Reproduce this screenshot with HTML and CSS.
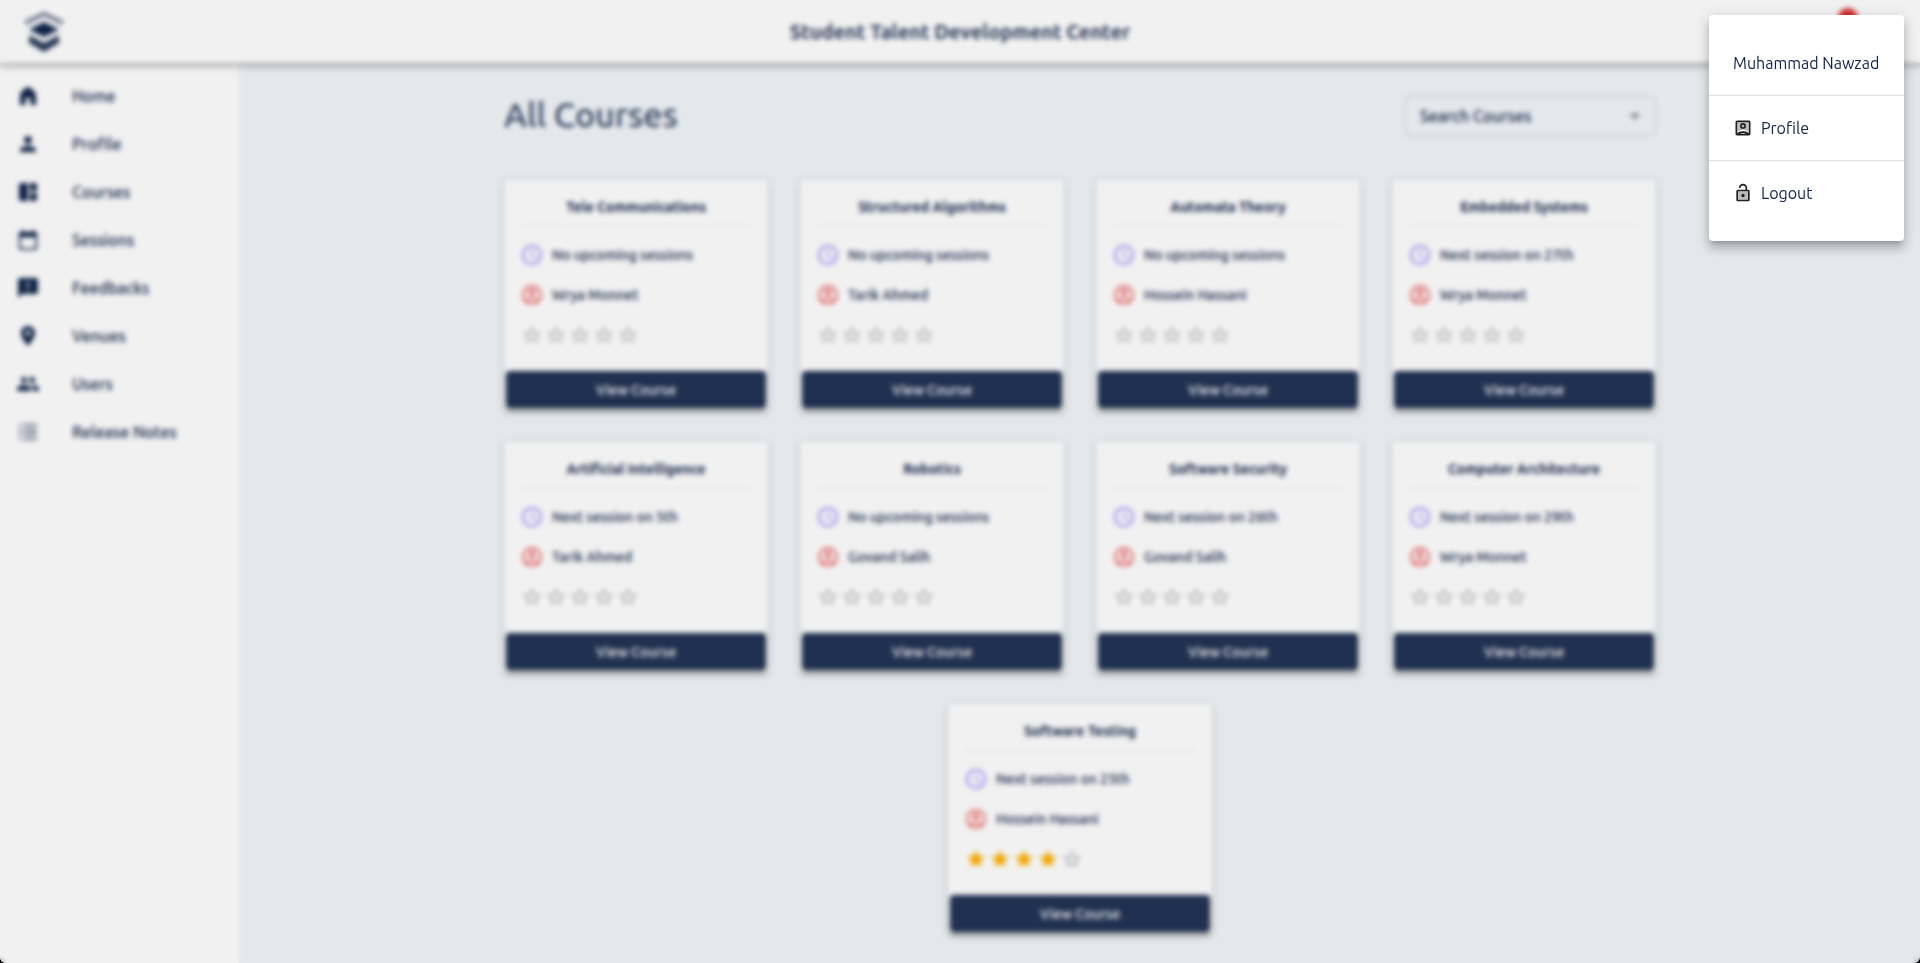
FILE: index.html
```html
<!DOCTYPE html>
<html lang="en">
<head>
<meta charset="utf-8">
<meta name="viewport" content="width=device-width, initial-scale=1">
<title>Student Talent Development Center</title>
<link rel="stylesheet" href="styles.css">
</head>
<body>
<svg class="sprite" aria-hidden="true">
  <symbol id="home" viewBox="0 0 24 24"><path d="M12 3C10 3 4 8 4 11v10h5.500v-7h5v7H20V11c0-3-6-8-8-8z"/></symbol>
  <symbol id="person" viewBox="0 0 24 24"><path d="M12 12c2.210 0 4-1.790 4-4s-1.790-4-4-4-4 1.790-4 4 1.790 4 4 4zm0 2c-2.670 0-8 1.340-8 4v2h16v-2c0-2.660-5.330-4-8-4z"/></symbol>
  <symbol id="board" viewBox="0 0 24 24"><path d="M12 21H5c-1.100 0-2-.9-2-2V5c0-1.100.9-2 2-2h7v18zm2 0h5c1.100 0 2-.9 2-2v-6h-7v8zm7-10V5c0-1.100-.9-2-2-2h-5v8h7z"/></symbol>
  <symbol id="calendar" viewBox="0 0 24 24"><path d="M20 3h-1V1h-2v2H7V1H5v2H4c-1.100 0-2 .9-2 2v16c0 1.100.9 2 2 2h16c1.100 0 2-.9 2-2V5c0-1.100-.9-2-2-2zm0 18H4V9h16v12z"/></symbol>
  <symbol id="feedback" viewBox="0 0 24 24"><path d="M20 2H4c-1.100 0-1.990.9-1.990 2L2 22l4-4h14c1.100 0 2-.9 2-2V4c0-1.100-.9-2-2-2zm-7 12h-2v-2h2v2zm0-4h-2V6h2v4z"/></symbol>
  <symbol id="pin" viewBox="0 0 24 24"><path d="M12 2C8.130 2 5 5.130 5 9c0 5.250 7 13 7 13s7-7.750 7-13c0-3.870-3.130-7-7-7zm0 9.500a2.500 2.500 0 1 1 0-5 2.500 2.500 0 0 1 0 5z"/></symbol>
  <symbol id="people" viewBox="0 0 24 24"><path d="M16 11c1.660 0 2.990-1.340 2.990-3S17.660 5 16 5s-3 1.340-3 3 1.340 3 3 3zm-8 0c1.660 0 2.990-1.340 2.990-3S9.660 5 8 5 5 6.340 5 8s1.340 3 3 3zm0 2c-2.330 0-7 1.170-7 3.500V19h14v-2.500c0-2.330-4.670-3.500-7-3.500zm8 0c-.29 0-.62.020-.97.050 1.160.84 1.970 1.970 1.970 3.450V19h6v-2.500c0-2.330-4.670-3.500-7-3.500z"/></symbol>
  <symbol id="list" viewBox="0 0 24 24"><path d="M3 4h3v2H3zm0 5h3v2H3zm0 4h3v2H3zm0 5h3v2H3zM8 4h13v2H8zm0 5h13v2H8zm0 4h13v2H8zm0 5h13v2H8z"/></symbol>
  <symbol id="clock" viewBox="0 0 24 24"><path d="M11.990 2C6.470 2 2 6.480 2 12s4.470 10 9.990 10C17.520 22 22 17.520 22 12S17.520 2 11.990 2zM12 20a8 8 0 1 1 0-16 8 8 0 0 1 0 16zm.5-13H11v6l5.250 3.150.75-1.230-4.500-2.670z"/></symbol>
  <symbol id="teacher" viewBox="0 0 24 24"><path fill-rule="evenodd" d="M12 2a10 10 0 1 0 0 20 10 10 0 0 0 0-20zM7.350 18.500a7.950 7.950 0 0 1 9.300 0 7.950 7.950 0 0 1-9.300 0zM18.140 17.120a9.950 9.950 0 0 0-12.280 0 8 8 0 1 1 12.280 0z"/><path fill-rule="evenodd" d="M12 6a3.500 3.500 0 1 0 0 7 3.500 3.500 0 0 0 0-7zm0 5a1.500 1.500 0 1 1 0-3 1.500 1.500 0 0 1 0 3z"/></symbol>
  <symbol id="star" viewBox="0 0 24 24"><path d="m22 9.240-7.190-.62L12 2 9.190 8.630 2 9.240l5.460 4.730L5.820 21 12 17.270 18.180 21l-1.630-7.030L22 9.240zM12 15.400l-3.760 2.270 1-4.280-3.320-2.880 4.380-.38L12 6.100l1.710 4.040 4.380.38-3.320 2.880 1 4.280L12 15.400z"/></symbol>
  <symbol id="star-full" viewBox="0 0 24 24"><path d="M12 17.270 18.180 21l-1.640-7.030L22 9.240l-7.190-.61L12 2 9.190 8.630 2 9.240l5.460 4.730L5.820 21z"/></symbol>
  <symbol id="empty-rating" viewBox="0 0 120 24">
    <use href="#star" x="1" y="1" width="22" height="22"/><use href="#star" x="25" y="1" width="22" height="22"/><use href="#star" x="49" y="1" width="22" height="22"/><use href="#star" x="73" y="1" width="22" height="22"/><use href="#star" x="97" y="1" width="22" height="22"/>
  </symbol>
</svg>

<div class="window">
  <div class="app">
    <header class="topbar">
      <a class="logo" href="#" aria-label="Student Talent Development Center">
        <svg viewBox="0 0 44 44" width="44" height="44"><path fill="none" stroke="currentColor" stroke-width="4" opacity=".6" d="M3 13 22 4l19 9"/><path fill="currentColor" d="M22 12 37 19.500 22 27 7 19.500z"/><path fill="currentColor" opacity=".9" d="m7 25 15 8 15-8v8l-15 9-15-9z"/></svg>
      </a>
      <h1 class="brand">Student Talent Development Center</h1>
      <button class="bell" type="button" aria-label="Notifications"><span class="badge"></span></button>
    </header>
    <div class="body">
      <nav class="sidebar">
        <a href="#"><svg><use href="#home"/></svg>Home</a>
        <a href="#"><svg><use href="#person"/></svg>Profile</a>
        <a href="#"><svg><use href="#board"/></svg>Courses</a>
        <a href="#"><svg class="small"><use href="#calendar"/></svg>Sessions</a>
        <a href="#"><svg><use href="#feedback"/></svg>Feedbacks</a>
        <a href="#"><svg><use href="#pin"/></svg>Venues</a>
        <a href="#"><svg><use href="#people"/></svg>Users</a>
        <a href="#"><svg class="light"><use href="#list"/></svg>Release Notes</a>
      </nav>
      <main class="content">
        <div class="head">
          <h2>All Courses</h2>
          <div class="search">
            <select aria-label="Search Courses"><option>Search Courses</option></select>
            <svg viewBox="0 0 24 24" width="24" height="24" aria-hidden="true"><path d="m7 10 5 5 5-5z"/></svg>
          </div>
        </div>
        <div class="cards">
          <article class="card"><h3>Tele Communications</h3><p><svg class="clock"><use href="#clock"/></svg>No upcoming sessions</p><p><svg class="teacher"><use href="#teacher"/></svg>Wrya Monnet</p><svg class="rating" role="img" aria-label="No rating"><use href="#empty-rating"/></svg><button type="button">View Course</button></article>
          <article class="card"><h3>Structured Algorithms</h3><p><svg class="clock"><use href="#clock"/></svg>No upcoming sessions</p><p><svg class="teacher"><use href="#teacher"/></svg>Tarik Ahmed</p><svg class="rating" role="img" aria-label="No rating"><use href="#empty-rating"/></svg><button type="button">View Course</button></article>
          <article class="card"><h3>Automata Theory</h3><p><svg class="clock"><use href="#clock"/></svg>No upcoming sessions</p><p><svg class="teacher"><use href="#teacher"/></svg>Hossein Hassani</p><svg class="rating" role="img" aria-label="No rating"><use href="#empty-rating"/></svg><button type="button">View Course</button></article>
          <article class="card"><h3>Embedded Systems</h3><p><svg class="clock"><use href="#clock"/></svg>Next session on 27th</p><p><svg class="teacher"><use href="#teacher"/></svg>Wrya Monnet</p><svg class="rating" role="img" aria-label="No rating"><use href="#empty-rating"/></svg><button type="button">View Course</button></article>
          <article class="card"><h3>Artificial Intelligence</h3><p><svg class="clock"><use href="#clock"/></svg>Next session on 5th</p><p><svg class="teacher"><use href="#teacher"/></svg>Tarik Ahmed</p><svg class="rating" role="img" aria-label="No rating"><use href="#empty-rating"/></svg><button type="button">View Course</button></article>
          <article class="card"><h3>Robotics</h3><p><svg class="clock"><use href="#clock"/></svg>No upcoming sessions</p><p><svg class="teacher"><use href="#teacher"/></svg>Govand Salih</p><svg class="rating" role="img" aria-label="No rating"><use href="#empty-rating"/></svg><button type="button">View Course</button></article>
          <article class="card"><h3>Software Security</h3><p><svg class="clock"><use href="#clock"/></svg>Next session on 26th</p><p><svg class="teacher"><use href="#teacher"/></svg>Govand Salih</p><svg class="rating" role="img" aria-label="No rating"><use href="#empty-rating"/></svg><button type="button">View Course</button></article>
          <article class="card"><h3>Computer Architecture</h3><p><svg class="clock"><use href="#clock"/></svg>Next session on 29th</p><p><svg class="teacher"><use href="#teacher"/></svg>Wrya Monnet</p><svg class="rating" role="img" aria-label="No rating"><use href="#empty-rating"/></svg><button type="button">View Course</button></article>
          <article class="card"><h3>Software Testing</h3><p><svg class="clock"><use href="#clock"/></svg>Next session on 25th</p><p><svg class="teacher"><use href="#teacher"/></svg>Hossein Hassani</p><svg class="rating" viewBox="0 0 120 24" role="img" aria-label="4 of 5 stars"><g class="gold"><use href="#star-full" x="1" y="1" width="22" height="22"/><use href="#star-full" x="25" y="1" width="22" height="22"/><use href="#star-full" x="49" y="1" width="22" height="22"/><use href="#star-full" x="73" y="1" width="22" height="22"/></g><use href="#star" x="97" y="1" width="22" height="22"/></svg><button type="button">View Course</button></article>
        </div>
      </main>
    </div>
  </div>
  <div class="backdrop"></div>
</div>

<div class="menu" role="menu">
  <div class="item name">Muhammad Nawzad</div>
  <a class="item" role="menuitem" href="#"><svg viewBox="0 0 24 24" aria-hidden="true"><path fill-opacity=".3" d="M5 5h14v12.200C17.300 15.200 14.700 14 12 14s-5.300 1.200-7 3.200z"/><path fill-rule="evenodd" d="M19 3H5a2 2 0 0 0-2 2v14a2 2 0 0 0 2 2h14a2 2 0 0 0 2-2V5a2 2 0 0 0-2-2zM8 19c1.200-.7 2.600-1 4-1s2.800.3 4 1H8zm11-.7c-1.800-1.500-4.300-2.300-7-2.300s-5.200.8-7 2.300V5h14v13.300z"/><path fill-rule="evenodd" d="M12 6a3.500 3.500 0 1 0 0 7 3.500 3.500 0 0 0 0-7zm0 5a1.500 1.500 0 1 1 0-3 1.500 1.500 0 0 1 0 3z"/></svg>Profile</a>
  <button class="item" role="menuitem" type="button"><svg viewBox="0 0 24 24" aria-hidden="true"><path fill-opacity=".3" d="M6 20h12V10H6v10z"/><path fill-rule="evenodd" d="M18 8h-1V6c0-2.760-2.240-5-5-5S7 3.240 7 6h2c0-1.660 1.340-3 3-3s3 1.340 3 3v2H6c-1.100 0-2 .9-2 2v10c0 1.100.9 2 2 2h12c1.100 0 2-.9 2-2V10c0-1.100-.9-2-2-2zm0 12H6V10h12v10z"/><circle cx="12" cy="15" r="2"/></svg>Logout</button>
</div>
</body>
</html>
```

FILE: styles.css
```css
* { box-sizing: border-box; }

html { background: #000; }

body {
  margin: 0;
  color: #0f2246;
  font: 400 16px/24px "Ubuntu", "Noto Sans", "Open Sans", sans-serif;
}

a { color: inherit; text-decoration: none; }
button, select { font: inherit; color: inherit; }
svg { fill: currentColor; flex: none; }
h1, h2, h3, p { margin: 0; }
.sprite { position: absolute; width: 0; height: 0; }

.window {
  position: relative;
  overflow: hidden;
  border-radius: 0 0 6px 6px;
}

.app {
  display: flex;
  flex-direction: column;
  min-height: 100vh;
  background: #e4e8eb;
  font-weight: 500;
}

.topbar {
  display: grid;
  grid-template-columns: 1fr auto 1fr;
  align-items: center;
  height: 63px;
  padding: 0 22px;
  background: #f1f1f1;
  box-shadow: 0 2px 4px -1px rgba(0, 0, 0, .2), 0 4px 5px rgba(0, 0, 0, .14), 0 1px 10px rgba(0, 0, 0, .12);
  z-index: 1;
}

.logo { display: flex; }
.brand { font-size: 20px; line-height: 32px; font-weight: 700; opacity: .9; }

.bell {
  position: relative;
  justify-self: end;
  width: 48px;
  height: 48px;
  margin-right: 36px;
  border: 0;
  background: none;
}

.badge {
  position: absolute;
  top: 0;
  right: 4px;
  width: 20px;
  height: 20px;
  border-radius: 50%;
  background: #d32f2f;
}

.body { display: flex; flex: 1; }

.sidebar {
  width: 240px;
  padding-top: 9px;
  background: #f1f1f1;
  border-right: 1px solid #e0e0e0;
}

.sidebar a {
  display: flex;
  align-items: center;
  gap: 32px;
  height: 48px;
  padding-left: 16px;
}

.sidebar svg { width: 24px; height: 24px; }
.sidebar .small { padding: 1px; }
.sidebar .light { opacity: .7; }

.content { flex: 1; padding: 33px 16px 0; }

.head {
  display: flex;
  justify-content: space-between;
  align-items: flex-start;
  max-width: 1152px;
  margin: 0 auto 44px;
}

.head h2 { font-size: 34px; line-height: 36px; font-weight: 500; opacity: .85; }

.search { position: relative; width: 251px; }

.search select {
  width: 100%;
  height: 40px;
  padding: 0 14px;
  appearance: none;
  border: 1px solid #c0c5d2;
  border-radius: 4px;
  background: transparent;
}

.search svg {
  position: absolute;
  top: 8px;
  right: 9px;
  color: #666;
  pointer-events: none;
}

.cards {
  display: flex;
  flex-wrap: wrap;
  justify-content: center;
  gap: 32px;
  max-width: 1184px;
  margin: 0 auto;
}

.card {
  display: flex;
  flex-direction: column;
  width: 264px;
  padding: 8px 2px 2px;
  border-radius: 4px;
  background: #f1f1f1;
  box-shadow: 0 3px 3px -2px rgba(0, 0, 0, .2), 0 3px 4px rgba(0, 0, 0, .14), 0 1px 8px rgba(0, 0, 0, .12);
}

.card h3 {
  height: 39px;
  margin: 0 14px 8px;
  border-bottom: 1px solid #dadada;
  font-size: 14px;
  line-height: 38px;
  font-weight: 700;
  text-align: center;
}

.card p {
  display: flex;
  align-items: center;
  gap: 8px;
  height: 40px;
  padding-left: 14px;
  font-size: 14px;
}

.card p svg { width: 24px; height: 24px; }
.clock { color: #9084e8; }
.teacher { color: #e05a5a; }

.rating {
  width: 120px;
  height: 24px;
  margin: 8px 14px 24px;
  color: #aaa;
}

.gold { color: #f3a800; }

.card button {
  height: 37px;
  padding: 0;
  border: 0;
  border-radius: 4px;
  background: #203050;
  color: #f1f1f1;
  font-size: 14px;
  font-weight: 500;
  box-shadow: 0 3px 1px -2px rgba(0, 0, 0, .2), 0 2px 2px rgba(0, 0, 0, .14), 0 1px 5px rgba(0, 0, 0, .12);
}

.backdrop {
  position: absolute;
  inset: 0;
  z-index: 2;
  backdrop-filter: blur(0.15rem);
}

.menu {
  position: absolute;
  top: 15px;
  right: 16px;
  z-index: 3;
  min-width: 195px;
  padding: 16px 0;
  border-radius: 4px;
  background: #fff;
  box-shadow: 0 5px 5px -3px rgba(0, 0, 0, .2), 0 8px 10px 1px rgba(0, 0, 0, .14), 0 3px 14px 2px rgba(0, 0, 0, .12);
}

.item {
  display: flex;
  align-items: center;
  gap: 8px;
  width: 100%;
  height: 64px;
  padding: 0 24px;
  border: 0;
  background: none;
  text-align: left;
}

.item + .item { height: 65px; border-top: 1px solid #e0e0e0; }
.item svg { width: 20px; height: 20px; color: #202020; }
```
